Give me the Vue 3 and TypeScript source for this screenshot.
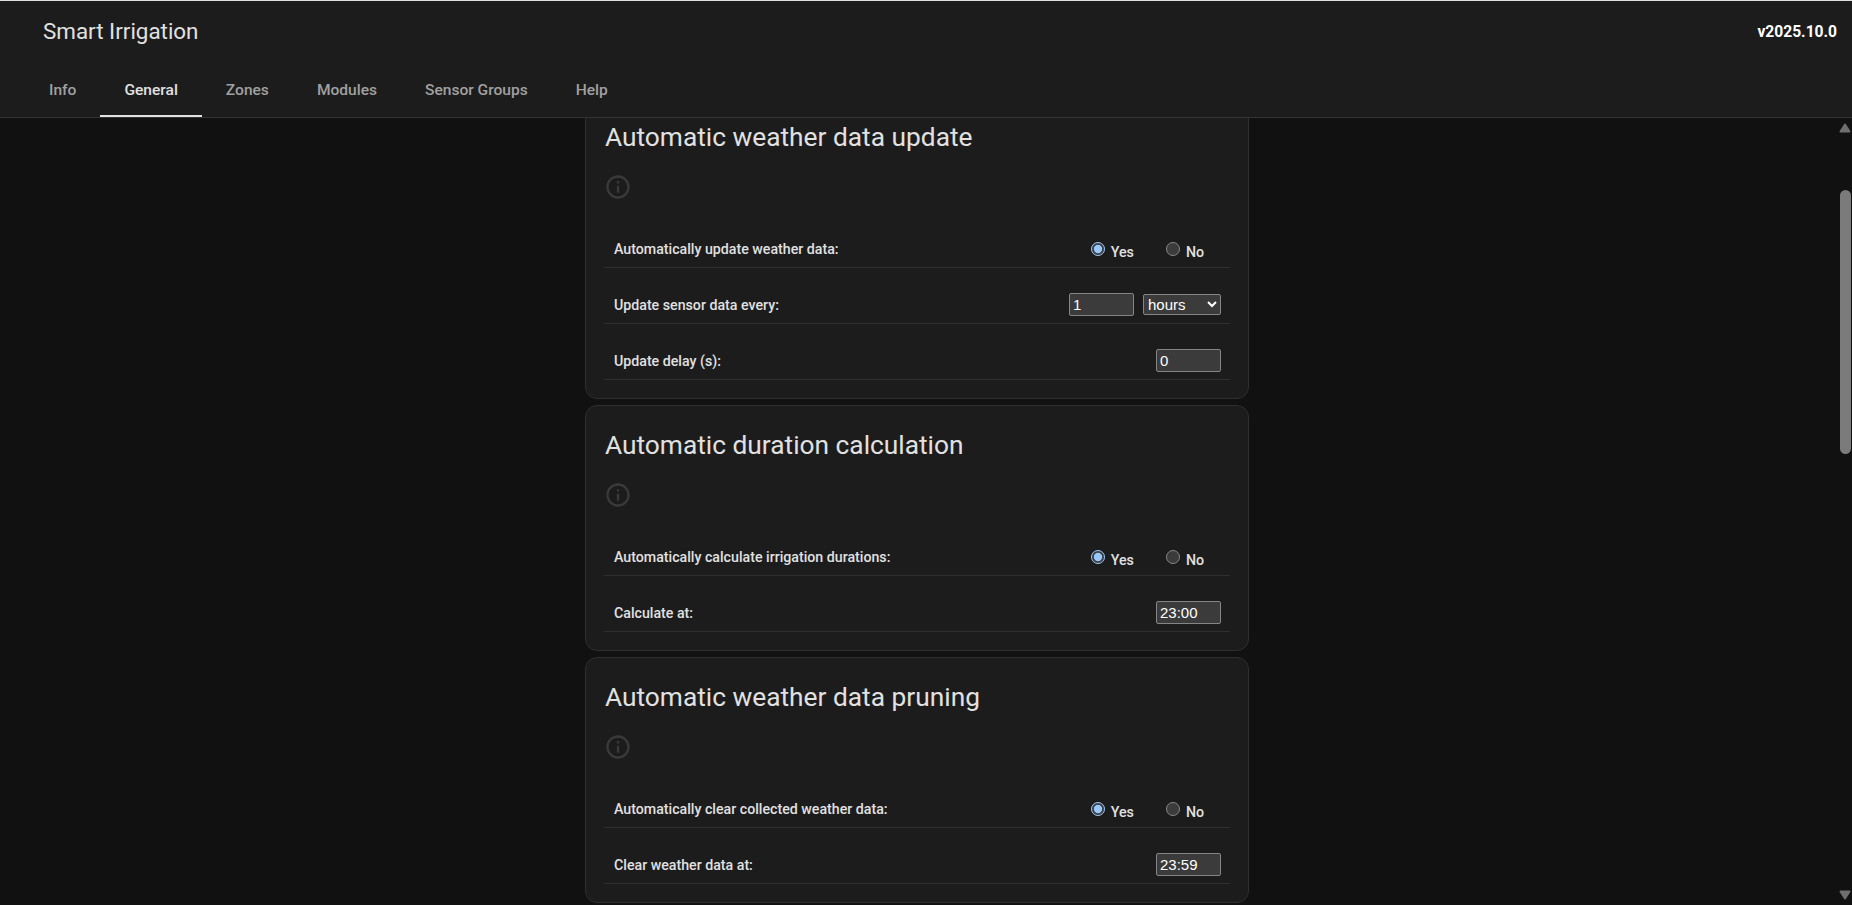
<template>
  <div class="page">
    <header class="top">
      <div class="toolbar">
        <div class="title">Smart Irrigation</div>
        <div class="version">v2025.10.0</div>
      </div>
      <nav class="tabs">
        <a v-for="tab in tabs" :key="tab" class="tab" :class="{ active: tab === 'General' }">{{ tab }}</a>
      </nav>
    </header>
    <div class="body">
      <main class="content">
        <section v-for="card in cards" :key="card.title" class="card">
          <h1 class="card-title">{{ card.title }}</h1>
          <div class="info-row">
            <svg class="info" viewBox="0 0 24 24" width="28" height="28">
              <path d="M11 7h2v2h-2zm0 4h2v6h-2zm1-9C6.48 2 2 6.48 2 12s4.48 10 10 10 10-4.48 10-10S17.52 2 12 2zm0 18c-4.41 0-8-3.59-8-8s3.59-8 8-8 8 3.59 8 8-3.59 8-8 8z" />
            </svg>
          </div>
          <div v-for="row in card.rows" :key="row.label" class="row">
            <label class="row-label">{{ row.label }}</label>
            <div v-if="row.kind === 'radio'" class="radios">
              <label class="radio"><input type="radio" :name="row.label" checked />Yes</label>
              <label class="radio"><input type="radio" :name="row.label" />No</label>
            </div>
            <div v-else class="controls">
              <input class="field" type="text" :value="row.value" />
              <select v-if="row.kind === 'unit'" class="unit">
                <option>hours</option>
                <option>minutes</option>
              </select>
            </div>
          </div>
        </section>
      </main>
      <div class="scrollbar">
        <svg class="arrow" viewBox="0 0 12 10" width="12" height="10">
          <path d="M6 1.5 L10.5 8.5 H1.5 Z" />
        </svg>
        <div class="track"><div class="thumb"></div></div>
        <svg class="arrow" viewBox="0 0 12 10" width="12" height="10">
          <path d="M1.5 1.5 H10.5 L6 8.5 Z" />
        </svg>
      </div>
    </div>
  </div>
</template>

<script setup lang="ts">
type Row = { label: string; kind: 'radio' | 'text' | 'unit'; value?: string }

const tabs = ['Info', 'General', 'Zones', 'Modules', 'Sensor Groups', 'Help']

const cards: { title: string; rows: Row[] }[] = [
  {
    title: 'Automatic weather data update',
    rows: [
      { label: 'Automatically update weather data:', kind: 'radio' },
      { label: 'Update sensor data every:', kind: 'unit', value: '1' },
      { label: 'Update delay (s):', kind: 'text', value: '0' }
    ]
  },
  {
    title: 'Automatic duration calculation',
    rows: [
      { label: 'Automatically calculate irrigation durations:', kind: 'radio' },
      { label: 'Calculate at:', kind: 'text', value: '23:00' }
    ]
  },
  {
    title: 'Automatic weather data pruning',
    rows: [
      { label: 'Automatically clear collected weather data:', kind: 'radio' },
      { label: 'Clear weather data at:', kind: 'text', value: '23:59' }
    ]
  }
]
</script>

<style>
html,
body {
  margin: 0;
  height: 100%;
  overflow: hidden;
  background: #111111;
}
</style>

<style scoped>
.page {
  display: flex;
  flex-direction: column;
  height: 905px;
  font-family: Roboto, sans-serif;
  color: #e1e1e1;
  color-scheme: dark;
  overflow: hidden;
}

.top {
  flex: none;
  height: 116px;
  background: #1c1c1c;
  border-top: 1px solid #e0e0e0;
  border-bottom: 1px solid #333333;
  display: flex;
  flex-direction: column;
  position: relative;
  z-index: 2;
}

.toolbar {
  display: flex;
  align-items: center;
  justify-content: space-between;
  height: 60px;
  padding: 0 15px 0 43px;
}

.title {
  font-size: 22.4px;
  color: #e1e1e1;
}

.version {
  padding-top: 2px;
  font-size: 15.6px;
  font-weight: 700;
  color: #ffffff;
}

.tabs {
  display: flex;
  margin-top: auto;
  padding-left: 25px;
}

.tab {
  display: flex;
  align-items: center;
  height: 48px;
  padding: 0 24px 5px;
  box-sizing: border-box;
  font-size: 15.55px;
  font-weight: 500;
  color: #a0a0a0;
  border-bottom: 2px solid transparent;
}

.tab.active {
  color: #e1e1e1;
  border-bottom-color: #e1e1e1;
}

.body {
  flex: 1;
  min-height: 0;
  display: flex;
}

.content {
  flex: 1;
  min-width: 0;
  display: flex;
  flex-direction: column;
  align-items: center;
  gap: 6px;
  margin-top: -21px;
  padding-right: 3px;
}

.card {
  flex: none;
  width: 664px;
  box-sizing: border-box;
  padding: 0 18px 18px;
  background: #1c1c1c;
  border: 1px solid #2f2f2f;
  border-radius: 12px;
}

.card-title {
  margin: 0;
  padding: 23px 0 0 1px;
  font-size: 26.3px;
  line-height: 32px;
  font-weight: 400;
  color: #e1e1e1;
}

.info-row {
  display: flex;
  height: 28px;
  margin-top: 20px;
  margin-bottom: 11px;
}

.info {
  fill: #3a3a3a;
}

.row {
  display: flex;
  align-items: flex-end;
  justify-content: space-between;
  height: 56px;
  box-sizing: border-box;
  padding: 0 9px 7px 10px;
  border-bottom: 1px solid #2f2f2f;
}

.row-label {
  padding-bottom: 3px;
  font-size: 14.2px;
  font-weight: 500;
  color: #e1e1e1;
}

.radios {
  display: flex;
  gap: 32px;
  margin-bottom: -1px;
  padding-right: 17px;
}

.radio {
  display: flex;
  align-items: flex-start;
  gap: 6px;
  font-size: 14.2px;
  line-height: 17px;
  font-weight: 500;
  color: #e1e1e1;
}

.radio input {
  width: 14px;
  height: 14px;
  margin: -2px 0 0;
}

.controls {
  display: flex;
  align-items: center;
  gap: 9px;
}

.field {
  width: 65px;
  height: 23px;
  box-sizing: border-box;
  padding: 1px 3px;
  font-family: "Liberation Sans", Arial, sans-serif;
  font-size: 15px;
  color: #ffffff;
  background: #3b3b3b;
  border: 1px solid #858585;
  border-radius: 2px;
}

.unit {
  width: 78px;
  height: 21px;
  font-family: "Liberation Sans", Arial, sans-serif;
  font-size: 15px;
  color: #ffffff;
  background: #3b3b3b;
  border: 1px solid #858585;
  border-radius: 2px;
}

.scrollbar {
  flex: none;
  width: 15px;
  box-sizing: border-box;
  padding-left: 2px;
  display: flex;
  flex-direction: column;
}

.arrow {
  flex: none;
  margin: 5px 0;
  fill: #6e6e6e;
  stroke: #6e6e6e;
  stroke-width: 2;
  stroke-linejoin: round;
}

.track {
  flex: 1;
}

.thumb {
  width: 11px;
  height: 264px;
  margin: 52px 0 0 1px;
  background: #7b7b7b;
  border-radius: 6px;
}
</style>
